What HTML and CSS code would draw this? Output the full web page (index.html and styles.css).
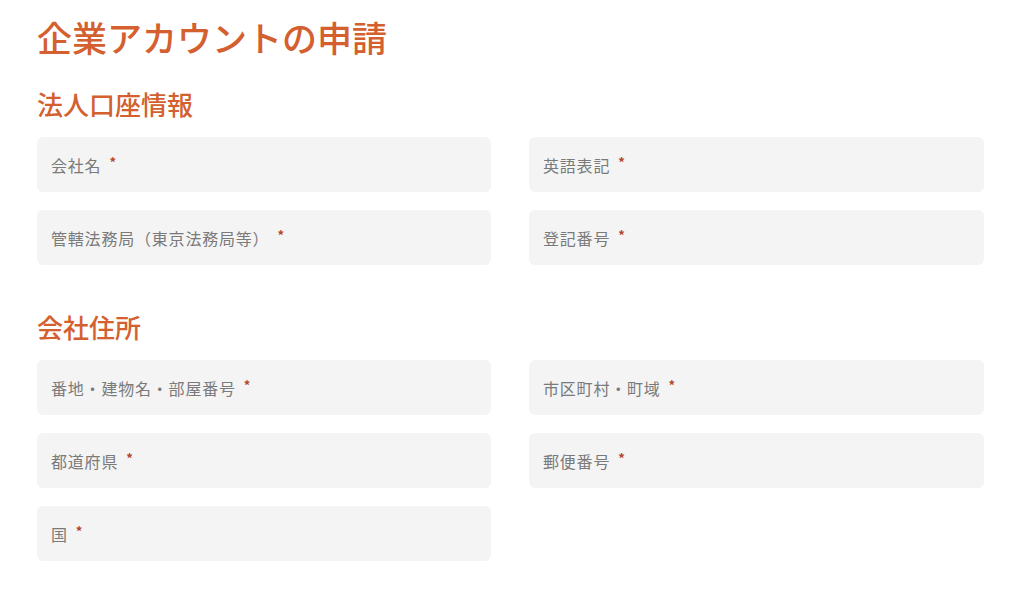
FILE: index.html
```html
<!DOCTYPE html>
<html lang="ja">
<head>
<meta charset="utf-8">
<link rel="stylesheet" href="styles.css">
</head>
<body>
<main class="page">
  <h1 class="title">企業アカウントの申請</h1>
  <section class="section">
    <h2 class="section-title">法人口座情報</h2>
    <div class="grid">
      <div class="field"><span class="label">会社名</span><span class="req">*</span></div>
      <div class="field"><span class="label">英語表記</span><span class="req">*</span></div>
      <div class="field"><span class="label">管轄法務局（東京法務局等）</span><span class="req">*</span></div>
      <div class="field"><span class="label">登記番号</span><span class="req">*</span></div>
    </div>
  </section>
  <section class="section second">
    <h2 class="section-title">会社住所</h2>
    <div class="grid">
      <div class="field"><span class="label">番地・建物名・部屋番号</span><span class="req">*</span></div>
      <div class="field"><span class="label">市区町村・町域</span><span class="req">*</span></div>
      <div class="field"><span class="label">都道府県</span><span class="req">*</span></div>
      <div class="field"><span class="label">郵便番号</span><span class="req">*</span></div>
      <div class="field"><span class="label">国</span><span class="req">*</span></div>
    </div>
  </section>
</main>
</body>
</html>
```
FILE: styles.css
```css
html, body {
  margin: 0;
  padding: 0;
  background: #ffffff;
}
body {
  font-family: "Noto Sans CJK JP", "Noto Sans", sans-serif;
}
.page {
  padding: 14px 40px 0 37px;
}
.title {
  margin: 0;
  font-size: 35px;
  line-height: 46px;
  font-weight: 500;
  color: #d3602e;
}
.section-title {
  margin: 0 0 15px 0;
  font-size: 26px;
  line-height: 36px;
  font-weight: 500;
  color: #d3602e;
}
.section {
  margin-top: 26px;
}
.section.second {
  margin-top: 44px;
}
.grid {
  display: grid;
  grid-template-columns: 454px 455px;
  column-gap: 38px;
  row-gap: 18px;
}
.field {
  height: 55px;
  background: #f4f4f4;
  border-radius: 6px;
  display: flex;
  align-items: center;
  padding: 0 14px;
  box-sizing: border-box;
}
.label {
  font-size: 16px;
  color: #7a7a7a;
  letter-spacing: 0.8px;
}
.req {
  margin-left: 8px;
  font-size: 13px;
  color: #b2452a;
  position: relative;
  top: -3px;
  font-weight: 700;
}
```
